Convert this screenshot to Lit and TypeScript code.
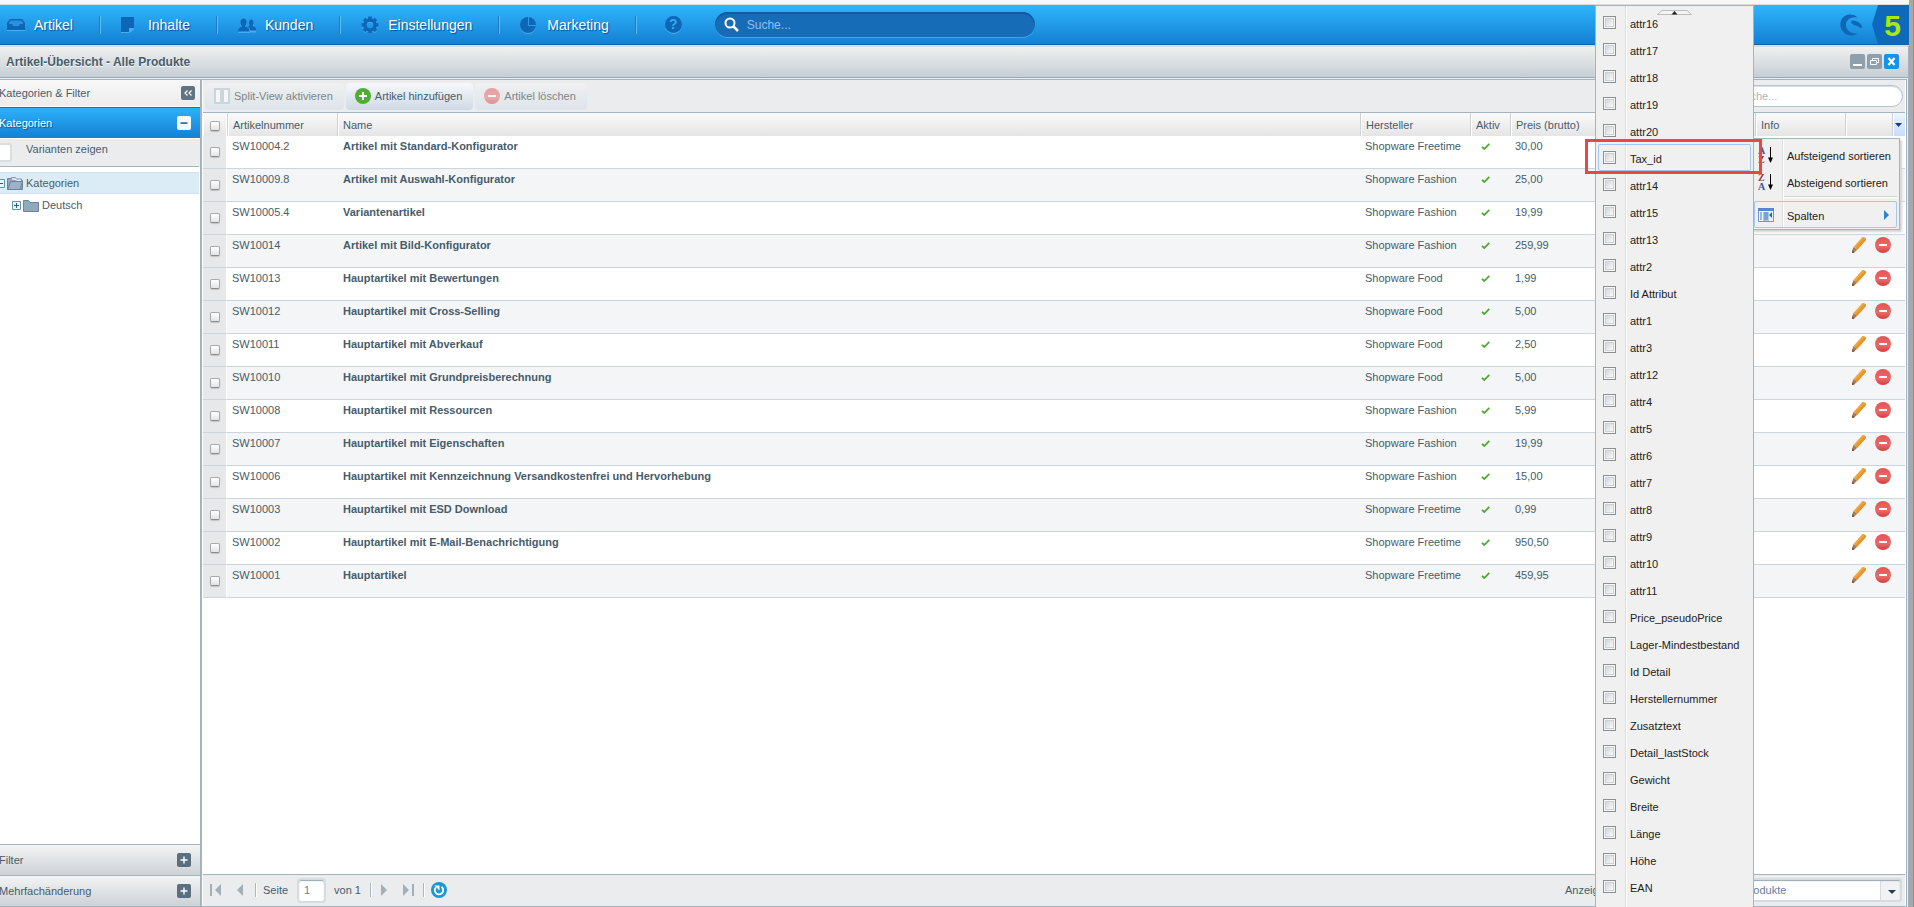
import { LitElement, html, svg, css, nothing } from "lit";
import { customElement } from "lit/decorators.js";
import { classMap } from "lit/directives/class-map.js";

interface Article {
  no: string;
  name: string;
  maker: string;
  price: string;
}

const ARTICLES: Article[] = [
  { no: "SW10004.2", name: "Artikel mit Standard-Konfigurator", maker: "Shopware Freetime", price: "30,00" },
  { no: "SW10009.8", name: "Artikel mit Auswahl-Konfigurator", maker: "Shopware Fashion", price: "25,00" },
  { no: "SW10005.4", name: "Variantenartikel", maker: "Shopware Fashion", price: "19,99" },
  { no: "SW10014", name: "Artikel mit Bild-Konfigurator", maker: "Shopware Fashion", price: "259,99" },
  { no: "SW10013", name: "Hauptartikel mit Bewertungen", maker: "Shopware Food", price: "1,99" },
  { no: "SW10012", name: "Hauptartikel mit Cross-Selling", maker: "Shopware Food", price: "5,00" },
  { no: "SW10011", name: "Hauptartikel mit Abverkauf", maker: "Shopware Food", price: "2,50" },
  { no: "SW10010", name: "Hauptartikel mit Grundpreisberechnung", maker: "Shopware Food", price: "5,00" },
  { no: "SW10008", name: "Hauptartikel mit Ressourcen", maker: "Shopware Fashion", price: "5,99" },
  { no: "SW10007", name: "Hauptartikel mit Eigenschaften", maker: "Shopware Fashion", price: "19,99" },
  { no: "SW10006", name: "Hauptartikel mit Kennzeichnung Versandkostenfrei und Hervorhebung", maker: "Shopware Fashion", price: "15,00" },
  { no: "SW10003", name: "Hauptartikel mit ESD Download", maker: "Shopware Freetime", price: "0,99" },
  { no: "SW10002", name: "Hauptartikel mit E-Mail-Benachrichtigung", maker: "Shopware Freetime", price: "950,50" },
  { no: "SW10001", name: "Hauptartikel", maker: "Shopware Freetime", price: "459,95" },
];

const COLUMNS = [
  "attr16", "attr17", "attr18", "attr19", "attr20", "Tax_id", "attr14", "attr15", "attr13", "attr2",
  "Id Attribut", "attr1", "attr3", "attr12", "attr4", "attr5", "attr6", "attr7", "attr8", "attr9",
  "attr10", "attr11", "Price_pseudoPrice", "Lager-Mindestbestand", "Id Detail", "Herstellernummer",
  "Zusatztext", "Detail_lastStock", "Gewicht", "Breite", "Länge", "Höhe", "EAN",
];

const NAV = [
  {
    label: "Artikel",
    icon: svg`<path class="lit" d="M3 4h12l3 5v6H0V9z"/><path d="M3 3h12l3 4v7H0V7z"/><path class="hole" d="M3.500 4.500h11L16.500 8H13l-1.500 2h-5L5 8H1.500z"/>`,
  },
  {
    label: "Inhalte",
    icon: svg`<path class="lit" d="M0 2h13v10l-5 5H0z"/><path d="M0 1h13v11H8v4H0z"/><path class="lit" d="M9 13h4l-4 4z"/>`,
  },
  {
    label: "Kunden",
    icon: svg`<g class="lit" transform="translate(0 1)"><path d="M10 15.500c0-3 1-3.500 3-4.500-1-1-1.500-5 1-5s2.500 4 1.200 5.500c2 .8 2.800 1.500 2.800 4z"/><path d="M0 16c0-3 1.500-4 4-5-2.500-3-2-8 1.500-8S9.500 8 7 11c3 1 4.500 2 4.500 5z"/></g><path d="M12 14.500c0-2-.5-3-2-4l1.800-.8C10.500 7 11 3.500 13.400 3.500S16 7.500 14.600 10c2.400.8 3.400 1.500 3.400 4.500z"/><path d="M0 15.500c0-3 1.500-4 4-5-2.500-3-2-8 1.500-8S9.500 7.500 7 10.500c3 1 4.500 2 4.500 5z"/>`,
  },
  {
    label: "Einstellungen",
    icon: svg`<g class="gear-lit"><circle cx="9" cy="10" r="5"/><path d="M9 1.500v3M9 15.500v3M.5 10h3M14.500 10h3M3 4l2 2M13 14l2 2M15 4l-2 2M5 14l-2 2"/></g><g class="gear"><circle cx="9" cy="9" r="5"/><path d="M9 .5v3M9 14.500v3M.5 9h3M14.500 9h3M3 3l2 2M13 13l2 2M15 3l-2 2M5 13l-2 2"/></g>`,
  },
  {
    label: "Marketing",
    icon: svg`<circle class="lit" cx="8" cy="10" r="8"/><circle cx="8" cy="9" r="8"/><path class="cut" d="M8.500 1v8.500H16"/>`,
  },
];

const minusCircle = (pale: boolean) => html`<svg class=${classMap({ ic: true, pale })} viewBox="0 0 16 16">
  <defs><linearGradient id="r" x2="0" y2="1"><stop offset="0" stop-color="#e75353"/><stop offset="0.600" stop-color="#e96a6a"/><stop offset="1" stop-color="#d03d3d"/></linearGradient></defs>
  <circle cx="8" cy="8" r="8" fill="url(#r)"/><path d="M4 7h8v2H4z" fill="#fff"/></svg>`;

const pencil = html`<svg class="ic" viewBox="0 0 16 16">
  <path d="M11.500 0h1.500l2 1.500v1.500L6 13 2.500 10z" fill="#eda63a"/>
  <path d="M15 3 6 13l-1.700-1.500L13.800 1z" fill="#e6942b"/>
  <path d="M2.500 10 6 13l-3.500 3H1v-2z" fill="#a9765a"/><path d="M1.500 13.500 3.500 15.300 1 16z" fill="#6b5044"/></svg>`;

const folder = (open: boolean) => html`<svg class="ic" viewBox="0 0 16 16">
  <path d="M.5 3.500h5l1.500 2h8.500v9H.5z" fill="#94a8bd" stroke="#6c859c"/>
  ${open ? svg`<path d="M4.500 4.500v-2h4l1 1.500h5v3" fill="#dfe7ee" stroke="#8499ad"/><path d="M3.500 6.500h12l-2.500 8H.8z" fill="#9fb1c4" stroke="#6c859c"/>` : nothing}</svg>`;

const knob = (open: boolean) => html`<svg class="knob" viewBox="0 0 9 9">
  <path d="M.5.5h8v8h-8z" fill="#e9f4f6" stroke="#5f98a8"/><path d=${open ? "M2 4h5v1H2z" : "M2 4h2V2h1v2h2v1H5v2H4V5H2z"} fill="#1d6677"/></svg>`;

const sortIcon = (a: string, b: string, ca: string, cb: string) => html`<svg class="ic over" viewBox="0 0 16 16">
  <text x="0" y="7" class="sort" fill=${ca}>${a}</text><text x="0" y="16" class="sort" fill=${cb}>${b}</text>
  <path d="M12.500 0v12" stroke="#000"/><path d="M10 10.500h5L12.500 16z"/></svg>`;

@customElement("app-root")
export class AppRoot extends LitElement {
  static styles = css`
    * { box-sizing: border-box; }
    :host {
      display: flex; flex-direction: column; position: relative; height: 100vh; overflow: hidden;
      padding-right: 5px; background: #a9a8a9; box-shadow: inset -1px 0 #8f8d9c;
      font: 11px/14px "Liberation Sans", Arial, sans-serif; color: #475c6a;
    }
    button, input, select { font: inherit; color: inherit; margin: 0; }
    button { border: 0; padding: 0; background: none; text-align: left; }
    a { color: inherit; text-decoration: none; }
    svg { display: block; flex: none; }
    .ic { width: 16px; height: 16px; }
    .over { overflow: visible; }
    .pale { opacity: 0.5; }
    .strip { flex: none; height: 5px; background: #f8f8f8; border-bottom: 1px solid #dcdcdc; }

    .topbar {
      flex: none; display: flex; align-items: center; height: 40px;
      background: linear-gradient(#2fb5fc, #1480d3); border-bottom: 1px solid #0a65b5;
      font-size: 14px; line-height: 20px; color: #fff;
    }
    .nav { display: flex; align-items: center; }
    .nav a {
      display: flex; align-items: center; gap: 9px; height: 18px; padding: 0 26px 0 21px;
      border-right: 1px solid #2277c6; box-shadow: 1px 0 #5dbcf6; text-shadow: 1px 1px 1px #0b4f92;
    }
    .nav a:first-child { padding-left: 7px; }
    .nav svg { width: 18px; height: 18px; fill: #0e66b7; }
    .nav .lit { fill: #45aef5; }
    .nav .hole { fill: #2a93e0; }
    .nav .cut { fill: none; stroke: #2c9be9; }
    .nav .gear { fill: none; stroke: #0e66b7; stroke-width: 3.500; }
    .nav .gear-lit { fill: none; stroke: #45aef5; stroke-width: 3; }
    .help {
      width: 17px; height: 17px; margin: 0 33px 0 29px; border-radius: 50%; background: #0e66b7; color: #3aa9f2;
      box-shadow: 0 1px #45aef5; font-weight: bold; line-height: 17px; text-align: center;
    }
    .find {
      display: flex; align-items: center; gap: 8px; width: 320px; height: 25px; padding: 0 9px; border-radius: 13px;
      background: #176cb8; box-shadow: inset 0 2px 1px #105a9f, 0 1px #3ba5f1;
    }
    .find svg { width: 15px; height: 15px; }
    .find input { flex: 1; min-width: 0; border: 0; background: none; padding: 0; font-size: 12px; color: #fff; }
    .find input::placeholder { color: #8fc0ea; opacity: 1; }
    .brand { display: flex; align-items: center; gap: 10px; margin-left: auto; height: 39px; }
    .brand .swirl { width: 22px; height: 22px; }
    .five {
      width: 37px; height: 39px; padding-left: 4px; background: #0f69ba; clip-path: polygon(6px 0, 100% 0, 100% 100%, 6px 100%, 0 50%);
      color: #a8ec00; font: bold 30px/41px "Liberation Sans", Arial, sans-serif; text-align: center;
    }

    .window { flex: 1; min-height: 0; display: flex; flex-direction: column; background: #ebeced; border-top: 2px solid #dadcdd; border-right: 1px solid #9fb0c0; }
    .title {
      flex: none; display: flex; align-items: center; height: 31px; padding: 0 9px 1px 6px; border-bottom: 1px solid #9aabb6;
      background: linear-gradient(#f0f0ef, #c6cfd5); font-weight: bold; font-size: 12px; color: #475c6a; text-shadow: 0 1px #fff;
    }
    .title h1 { flex: 1; margin: 0; font: inherit; }
    .wins { display: flex; gap: 2px; }
    .wins svg { width: 15px; height: 15px; }
    .body { flex: 1; min-height: 0; display: flex; margin: 1px 1px 0 0; border: solid #a3b3bf; border-width: 1px 1px 1px 0; }

    .side { flex: none; display: flex; flex-direction: column; width: 202px; border-right: 2px solid #a3b3bf; overflow: hidden; }
    .bar { flex: none; display: flex; align-items: center; justify-content: space-between; width: 210px; margin-left: -10px; padding: 0 9px; }
    .bar svg { width: 14px; height: 14px; }
    .head { height: 27px; padding-right: 5px; background: linear-gradient(#f8f8f8, #ececed); border-bottom: 1px solid #fff; }
    .open { height: 31px; background: linear-gradient(#2db1f9, #1480d3); border-top: 1px solid #0f71c2; color: #fff; text-shadow: 1px 1px 1px #0b4f92; }
    .shut { height: 31px; background: linear-gradient(#f3f4f4, #cdd2d6); border-top: 1px solid #a3b3bf; }
    .variants { flex: none; display: flex; gap: 14px; height: 29px; border-top: 1px solid #fff; border-bottom: 1px solid #a3b3bf; margin-right: 1px; }
    .variants input { appearance: none; flex: none; width: 22px; height: 19px; margin: 4px 0 0 -10px; border: 2px solid #d9dde0; border-radius: 3px; background: #fff; }
    .variants label { padding-top: 3px; }
    .tree { flex: 1; margin: 0; padding: 5px 1px 0 0; list-style: none; background: #fff; }
    .tree li { display: flex; align-items: center; gap: 2px; height: 22px; }
    .tree .sel { margin-left: -4px; background: #dcecf7; border: solid #cfe0ea; border-width: 1px 0; }
    .tree .sub { padding-left: 12px; }
    .tree span { padding-left: 1px; }
    .knob { width: 9px; height: 9px; }

    .main { flex: 1; min-width: 0; display: flex; flex-direction: column; border: solid #fff; border-width: 0 1px; }
    .tools { flex: none; display: flex; align-items: center; gap: 2px; height: 33px; padding: 0 2px; border-bottom: 1px solid #a3b3bf; }
    .tools button { display: flex; align-items: center; gap: 4px; height: 27px; padding: 0 11px 0 9px; border-radius: 4px; background: linear-gradient(#f7f8fa, #cfd9e6); }
    .tools .off { background: linear-gradient(#eff0f1, #dde4ea); color: #7e8487; }
    .tools input { width: 175px; height: 22px; margin-left: auto; padding: 0 8px; border: 1px solid #b4c3cf; border-radius: 11px; background: #fff; box-shadow: inset 0 1px 1px #d5dde3; }
    input::placeholder { color: #a9b5bf; opacity: 1; }
    .sheet { flex: 1; min-height: 0; background: #fff; overflow: hidden; }
    table { width: 100%; border-collapse: separate; border-spacing: 0; table-layout: fixed; }
    th { height: 23px; padding: 1px 5px 0; font-weight: normal; text-align: left; background: linear-gradient(#fafafa, #e5e5e6); border-left: 1px solid #cfd2d4; box-shadow: inset 1px 0 #fff; white-space: nowrap; }
    th:first-child { border-left: 0; }
    td { height: 33px; padding: 3px 4px 0 5px; vertical-align: top; border-bottom: 1px solid #cbd5de; white-space: nowrap; }
    .pick { padding: 11px 0 0 7px; background: #e7e8ea; border-right: 1px solid #fff; }
    th.pick { padding-top: 3px; background: linear-gradient(#fafafa, #e5e5e6); }
    tr:nth-child(even) td:not(.pick) { background: #f3f5f7; }
    td.name { font-weight: bold; padding-left: 6px; }
    .w-pick { width: 24px; } .w-no { width: 110px; } .w-maker { width: 110px; } .w-active { width: 40px; }
    .w-price { width: 100px; } .w-rest { width: 145px; } .w-info { width: 90px; } .w-act { width: 47px; } .w-trig { width: 13px; }
    .pick input { appearance: none; display: block; width: 10px; height: 10px; border: 1px solid #a9a9a9; border-bottom-color: #8b8b8b; border-radius: 2px; background: linear-gradient(#fff, #e4e4e4); box-shadow: 0 1px 1px #c4c4c4; }
    .tick { width: 9px; height: 7px; margin: 4px 0 0 6px; }
    td.deeds { padding: 2px 0 0 6px; }
    .acts { display: flex; gap: 8px; }
    .trig { padding: 0 2px; background: linear-gradient(#eef5fe, #c6dcfa); }
    .trig svg { width: 7px; height: 4px; }

    .pager { flex: none; display: flex; align-items: center; height: 32px; padding: 0 3px 1px 7px; border-top: 1px solid #a3b3bf; white-space: nowrap; }
    .pager > * { flex: none; }
    .pager svg { width: 12px; height: 12px; }
    .step { width: 12px; }
    .gap { width: 2px; height: 14px; margin: 0 6px 0 9px; border-left: 1px solid #a9b7c0; background: #fff; }
    .pager .refresh, .pager .refresh svg { width: 16px; height: 16px; }
    .page { width: 29px; height: 25px; margin: 0 8px 0 9px; padding: 0 5px; border: 2px solid #d5dbe1; border-radius: 4px; background: #fff; box-shadow: inset 0 1px 1px #98a6b1; color: #6c8494; }
    .count { width: 152px; margin-left: auto; }
    .pager .combo { display: flex; align-items: center; }
    .combo select {
      appearance: none; width: 185px; height: 24px; padding: 0 30px 0 8px; border: 2px solid #d5dbe1; border-radius: 3px; color: #64809a;
      background: linear-gradient(90deg, #d5dbe1 1px, #f1f2f3 1px) right / 20px 100% no-repeat, #fff; box-shadow: inset 0 1px 1px #98a6b1;
    }
    .pager .combo svg { width: 8px; height: 4px; margin: 4px 6px 0 -14px; pointer-events: none; }

    .menu { position: absolute; top: 5px; right: 160px; bottom: -2px; width: 159px; padding: 3px 2px 0; background: #f0f0f0; border: 1px solid #a3b3bf; box-shadow: inset 29px 0 #f0f0f0, inset 30px 0 #dedede, inset 31px 0 #fff; color: #222; }
    .up { width: 35px; height: 5px; margin: 1px 0 -6px 59px; }
    .entry { position: relative; display: flex; gap: 14px; height: 27px; padding: 6px 4px 0; border: 1px solid transparent; }
    .entry input { appearance: none; width: 13px; height: 13px; border: 1px solid #8b8f8f; background: linear-gradient(135deg, #c6cad2, #fafafa 80%) padding-box; box-shadow: inset 0 0 0 1px #f6f6f6, inset 0 0 0 2px #cdd0d7; }
    .entry label { flex: 1; padding-top: 1px; }
    .hot { border-color: #a6c6f5; border-radius: 2px; }
    .mark { position: absolute; inset: -6px -12px -4px -14px; border: 3px solid #e84743; pointer-events: none; }

    .context { position: absolute; top: 138px; right: 14px; width: 149px; padding: 2px 2px 1px; background: #f0f0f0; border: 1px solid #a3b3bf; box-shadow: inset 30px 0 #f0f0f0, inset 31px 0 #dedede, inset 32px 0 #fff, 2px 2px 2px #d4d4d4; color: #222; }
    .context button { display: flex; align-items: center; gap: 13px; width: 100%; height: 27px; padding: 0 7px 0 3px; border: 1px solid transparent; white-space: nowrap; }
    .context span { flex: 1; padding-top: 2px; }
    .context .hot { border-color: #a6c6f5; }
    .context hr { height: 2px; margin: 1px 0 3px 30px; border: 0; border-top: 1px solid #d4d4d4; background: #fff; }
    .context .arrow { width: 5px; height: 10px; }
    .sort { font: bold 10px "Liberation Serif", serif; }
  `;

  private renderTop() {
    return html`<header class="topbar">
      <nav class="nav">
        ${NAV.map((n) => html`<a href="#"><svg viewBox="0 0 18 18">${n.icon}</svg>${n.label}</a>`)}
      </nav>
      <button class="help" aria-label="Hilfe">?</button>
      <label class="find">
        <svg viewBox="0 0 15 15"><circle cx="6" cy="6" r="4.500" fill="none" stroke="#fff" stroke-width="2"/><path d="M9 9l5 5" stroke="#fff" stroke-width="2.500"/></svg>
        <input type="text" placeholder="Suche..." aria-label="Suche" />
      </label>
      <div class="brand">
        <svg class="swirl" viewBox="0 0 22 22"><path fill="#1067b7" d="M18 3.500C13-.8 6-.6 2.500 4-1 9-.3 16 5 19.500c4 2.800 9 2.600 12.500.3-6 .2-11-3-11.500-8C5.500 6 11 2 18 3.500zM22 12.500C21 9 17.500 7 13 6.500c-2 .3-2.500 2-1 3.300 2.500 2 6.500 2 8.500 4.200 1 1.200 1.500-.3 1.500-1.500z"/></svg>
        <div class="five">5</div>
      </div>
    </header>`;
  }

  private renderSide() {
    return html`<aside class="side">
      <div class="bar head">Kategorien &amp; Filter
        <svg viewBox="0 0 14 14"><rect width="14" height="14" rx="2" fill="#5f7484"/><path d="M6.500 4.500 4 7l2.500 2.500M10.500 4.500 8 7l2.500 2.500" fill="none" stroke="#fff" stroke-width="1.200"/></svg>
      </div>
      <div class="bar open">Kategorien
        <svg viewBox="0 0 14 14"><rect width="14" height="14" rx="2" fill="#f6f8fa"/><path d="M3.500 6.300h7v1.500h-7z" fill="#17598f"/></svg>
      </div>
      <div class="variants"><input id="variants" type="checkbox" /><label for="variants">Varianten zeigen</label></div>
      <ul class="tree">
        <li class="sel">${knob(true)}${folder(true)}<span>Kategorien</span></li>
        <li class="sub">${knob(false)}${folder(false)}<span>Deutsch</span></li>
      </ul>
      ${["Filter", "Mehrfachänderung"].map((t) => html`<div class="bar shut">${t}
        <svg viewBox="0 0 14 14"><rect width="14" height="14" rx="2" fill="#5a7080"/><path d="M7 3.500v7M3.500 7h7" stroke="#fff" stroke-width="1.400"/></svg>
      </div>`)}
    </aside>`;
  }

  private renderTable() {
    return html`<div class="sheet"><table>
      <thead><tr>
        <th class="pick w-pick"><input type="checkbox" aria-label="Alle auswählen" /></th>
        <th class="w-no">Artikelnummer</th><th>Name</th><th class="w-maker">Hersteller</th>
        <th class="w-active">Aktiv</th><th class="w-price">Preis (brutto)</th><th class="w-rest"></th>
        <th class="w-info">Info</th><th class="w-act"></th>
        <th class="w-trig trig"><svg viewBox="0 0 7 4"><path d="M0 0h7L3.500 4z" fill="#123a8c"/></svg></th>
      </tr></thead>
      <tbody>${ARTICLES.map((a) => html`<tr>
        <td class="pick"><input type="checkbox" aria-label=${a.no} /></td>
        <td>${a.no}</td><td class="name">${a.name}</td><td>${a.maker}</td>
        <td><svg class="tick" viewBox="0 0 9 7"><path d="M1 3.800 3.300 6 8.300.8" fill="none" stroke="#4dab2e" stroke-width="1.800"/></svg></td>
        <td>${a.price}</td><td></td><td></td>
        <td class="deeds" colspan="2"><div class="acts">
          <button aria-label="Bearbeiten">${pencil}</button><button aria-label="Löschen">${minusCircle(false)}</button>
        </div></td>
      </tr>`)}</tbody>
    </table></div>`;
  }

  private renderPager() {
    const step = (d: string, label: string) =>
      html`<button class="step" aria-label=${label}><svg viewBox="0 0 12 12"><path d=${d} fill="#a3afb8"/></svg></button>`;
    return html`<footer class="pager">
      ${step("M0 0h2v12H0zM11 0v12L5 6z", "Erste Seite")}
      <span class="step"></span>
      ${step("M9 0v12L3 6z", "Vorherige Seite")}
      <i class="gap"></i>
      <label for="page">Seite</label><input class="page" id="page" value="1" /><span>von 1</span>
      <i class="gap"></i>
      ${step("M3 0v12l6-6z", "Nächste Seite")}
      <span class="step"></span>
      ${step("M1 0v12l6-6zM10 0h2v12h-2z", "Letzte Seite")}
      <i class="gap"></i>
      <button class="refresh" aria-label="Aktualisieren"><svg viewBox="0 0 16 16"><circle cx="8" cy="8" r="8" fill="#1b97d5"/><path d="M10.500 4.800A4.200 4.200 0 1 1 5 5.200" fill="none" stroke="#fff" stroke-width="1.800"/><path d="M3.500 3.500h5v5z" fill="#fff"/></svg></button>
      <label class="count" for="count">Anzeige:</label>
      <div class="combo"><select id="count"><option>20 Produkte</option></select>
        <svg viewBox="0 0 8 4"><path d="M0 0h8L4 4z" fill="#2b3b47"/></svg></div>
    </footer>`;
  }

  private renderMenus() {
    return html`
      <div class="context">
        <button>${sortIcon("A", "Z", "#35568f", "#9a3d44")}<span>Aufsteigend sortieren</span></button>
        <button>${sortIcon("Z", "A", "#9a3d44", "#35568f")}<span>Absteigend sortieren</span></button>
        <hr />
        <button class="hot">
          <svg class="ic" viewBox="0 0 16 16"><path d="M.5 1.500h15v13H.5z" fill="#eef4fd" stroke="#6f95cf"/><path d="M0 1h16v3H0z" fill="#5686cf"/><path d="M5 5h6v9H5z" fill="#a9c8f2"/><path d="M2 6h2M2 8h2M2 10h2M2 12h2M6 6h4M6 8h4M6 10h4M6 12h4" stroke="#4a79bf"/><path d="M14 5v6l-3-3z" fill="#2a5fb4"/></svg>
          <span>Spalten</span><svg class="arrow" viewBox="0 0 5 10"><path d="M0 0l5 5-5 5z" fill="#2c84d2"/></svg>
        </button>
      </div>
      <div class="menu">
        <svg class="up" viewBox="0 0 35 5"><path d="M.5 4.500 5 .5h25l4.500 4z" fill="#f4f4f4" stroke="#bdbdbd"/><path d="M14.500 4.500h6l-3-3.500z" fill="#222"/></svg>
        ${COLUMNS.map((c, i) => html`<div class=${classMap({ entry: true, hot: c === "Tax_id" })}>
          <input type="checkbox" id="col${i}" /><label for="col${i}">${c}</label>
          ${c === "Tax_id" ? html`<div class="mark"></div>` : nothing}
        </div>`)}
      </div>`;
  }

  render() {
    return html`
      <div class="strip"></div>
      ${this.renderTop()}
      <section class="window">
        <div class="title"><h1>Artikel-Übersicht - Alle Produkte</h1>
          <div class="wins">
            <button aria-label="Minimieren"><svg viewBox="0 0 15 15"><rect width="15" height="15" rx="2" fill="#8fa0ac"/><path d="M3 10h9v2H3z" fill="#fff"/></svg></button>
            <button aria-label="Wiederherstellen"><svg viewBox="0 0 15 15"><rect width="15" height="15" rx="2" fill="#8fa0ac"/><path d="M5.500 6V4.500h6v4H10M3.500 6.500h6v4h-6z" fill="none" stroke="#fff"/></svg></button>
            <button aria-label="Schließen"><svg viewBox="0 0 15 15"><rect width="15" height="15" rx="2" fill="#1493ea"/><path d="M4.500 4l6 7M10.500 4l-6 7" stroke="#fff" stroke-width="2.200"/></svg></button>
          </div>
        </div>
        <div class="body">
          ${this.renderSide()}
          <main class="main">
            <div class="tools">
              <button class="off"><svg class="ic" viewBox="0 0 16 16"><path d="M1 1h6v14H1zM9 1h6v14H9z" fill="#f4f6f8" stroke="#cbd5dc" stroke-width="2"/></svg>Split-View aktivieren</button>
              <button><svg class="ic" viewBox="0 0 16 16"><circle cx="8" cy="8" r="8" fill="#4fae32"/><path d="M8 4v8M4 8h8" stroke="#fff" stroke-width="2"/></svg>Artikel hinzufügen</button>
              <button class="off">${minusCircle(true)}Artikel löschen</button>
              <input type="text" placeholder="Suche..." aria-label="Artikel suchen" />
            </div>
            ${this.renderTable()}
            ${this.renderPager()}
          </main>
        </div>
      </section>
      ${this.renderMenus()}
    `;
  }
}
